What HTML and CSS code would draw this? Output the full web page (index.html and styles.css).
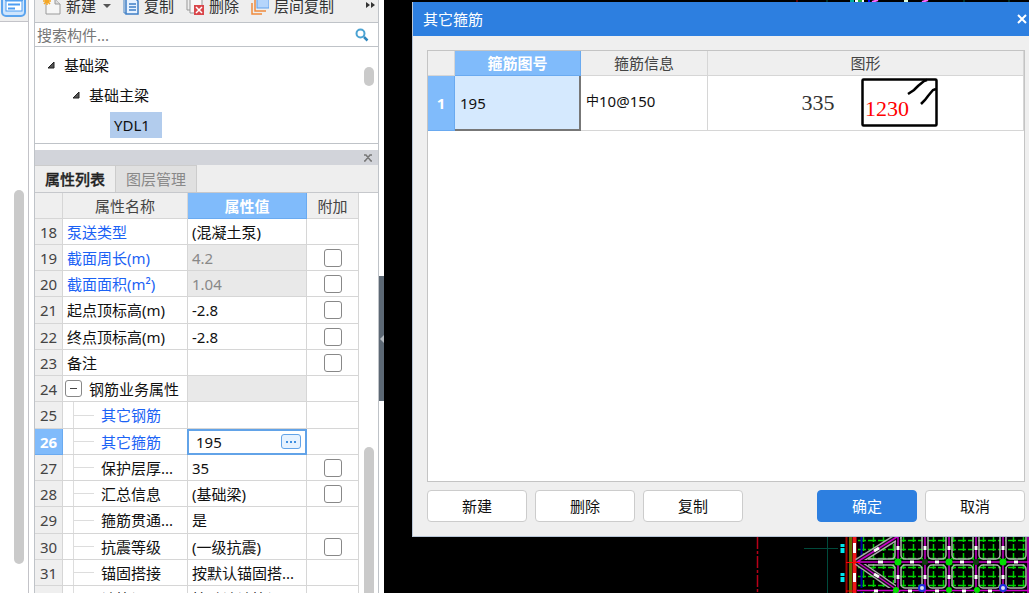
FILE: index.html
```html
<!DOCTYPE html>
<html lang="zh-CN">
<head>
<meta charset="utf-8">
<title>其它箍筋</title>
<link rel="stylesheet" href="styles.css">
</head>
<body>
<div class="app">
  <aside class="nav">
    <div class="nav-bar">
      <button class="nav-btn" aria-label="导航">
        <svg width="18" height="14" viewBox="0 0 18 14"><rect width="18" height="3" fill="#5ba4ee"/><path d="M3 0v2M7 0v2M12 0v2" stroke="#fff"/><rect x="1" y="3" width="16" height="10" fill="#fff" stroke="#4d9df2"/><path d="M3 6.500h12M3 10.500h7" stroke="#4d9df2" stroke-width="2"/></svg>
      </button>
    </div>
    <div class="nav-track"><div class="thumb nav-thumb"></div></div>
  </aside>

  <main class="dock">
    <div class="toolbar">
      <button class="tool tool-new"><svg width="19" height="20" viewBox="0 0 19 20"><path d="M3 4h9l5 5v10H3z" fill="#f6f6f6" stroke="#9a9a9a"/><path d="M12 4v5h5" fill="#ddd" stroke="#9a9a9a"/><path d="M4 2v8M0 6h8M1 3l6 6M7 3L1 9" stroke="#f5a623" stroke-width="1.500"/></svg>新建<span class="caret"></span></button>
      <button class="tool tool-copy"><svg width="17" height="20" viewBox="0 0 17 20"><path d="M1 3v15h3" fill="none" stroke="#4784c7"/><path d="M3 2h8l4 4v13H3z" fill="#e7f2ff" stroke="#3f7fc6" stroke-width="1.500"/><path d="M6 9h7M6 12h7M6 15h7" stroke="#3f7fc6" stroke-width="1.500"/></svg>复制</button>
      <button class="tool tool-del"><svg width="18" height="20" viewBox="0 0 18 20"><path d="M1 3v12h3" fill="none" stroke="#999"/><path d="M4 1h8l4 4v13H4z" fill="#f7f7f7" stroke="#999"/><rect x="8" y="10" width="10" height="10" fill="#d9474b"/><path d="M10 12l6 6M16 12l-6 6" stroke="#fff" stroke-width="1.500"/></svg>删除</button>
      <button class="tool tool-floor"><svg width="18" height="20" viewBox="0 0 18 20"><path d="M1 8v11h10M4 5v11h11" fill="none" stroke="#ef8b3c" stroke-width="1.500"/><rect x="6" y="1" width="12" height="12" fill="#b5d5fb" stroke="#5fa0ec"/></svg>层间复制</button>
      <button class="more" aria-label="更多"><svg width="10" height="8" viewBox="0 0 10 8"><path d="M0 1l4 3-4 3zM5 1l4 3-4 3z" fill="#333"/></svg></button>
    </div>
    <div class="search">
      <input type="text" placeholder="搜索构件..." aria-label="搜索构件">
      <svg width="14" height="14" viewBox="0 0 14 14"><circle cx="5.500" cy="5.500" r="4" fill="none" stroke="#4ba3d3" stroke-width="2"/><path d="M9 9l3.500 3.500" stroke="#2f86bd" stroke-width="2.500"/></svg>
    </div>
    <div class="tree">
      <ul>
        <li class="lv1"><svg width="8" height="8" viewBox="0 0 8 8"><path d="M7 1v6H1z" fill="#555" stroke="#222"/></svg>基础梁</li>
        <li class="lv2"><svg width="8" height="8" viewBox="0 0 8 8"><path d="M7 1v6H1z" fill="#555" stroke="#222"/></svg>基础主梁</li>
        <li class="lv3"><span class="picked">YDL1</span></li>
      </ul>
      <div class="thumb tree-thumb"></div>
    </div>

    <section class="props">
      <div class="props-title"><button aria-label="关闭"><svg width="8" height="8" viewBox="0 0 8 8"><path d="M0 1h2l5 6h1M8 1H6L1 7H0" fill="none" stroke="#777" stroke-width="1.500"/></svg></button></div>
      <div class="tabs"><button class="tab active">属性列表</button><button class="tab">图层管理</button></div>
      <div class="props-body">
        <table class="grid">
          <colgroup><col class="c-no"><col class="c-name"><col class="c-value"><col class="c-add"></colgroup>
          <thead><tr><th></th><th>属性名称</th><th class="hot">属性值</th><th>附加</th></tr></thead>
          <tbody>
            <tr><th>18</th><td class="link">泵送类型</td><td>(混凝土泵)</td><td></td></tr>
            <tr><th>19</th><td class="link">截面周长(m)</td><td class="off">4.2</td><td class="tick"><input type="checkbox" aria-label="截面周长 附加"></td></tr>
            <tr><th>20</th><td class="link">截面面积(m²)</td><td class="off">1.04</td><td class="tick"><input type="checkbox" aria-label="截面面积 附加"></td></tr>
            <tr><th>21</th><td>起点顶标高(m)</td><td>-2.8</td><td class="tick"><input type="checkbox" aria-label="起点顶标高 附加"></td></tr>
            <tr><th>22</th><td>终点顶标高(m)</td><td>-2.8</td><td class="tick"><input type="checkbox" aria-label="终点顶标高 附加"></td></tr>
            <tr><th>23</th><td>备注</td><td></td><td class="tick"><input type="checkbox" aria-label="备注 附加"></td></tr>
            <tr><th>24</th><td class="group"><div class="group-in"><button class="fold" aria-label="折叠"></button>钢筋业务属性</div></td><td class="off"></td><td></td></tr>
            <tr><th>25</th><td class="sub link">其它钢筋</td><td></td><td></td></tr>
            <tr><th class="hot">26</th><td class="sub link">其它箍筋</td><td class="edit"><div class="editor"><input type="text" value="195" aria-label="其它箍筋"><button aria-label="编辑"><i></i><i></i><i></i></button></div></td><td></td></tr>
            <tr><th>27</th><td class="sub">保护层厚...</td><td>35</td><td class="tick"><input type="checkbox" aria-label="保护层厚度 附加"></td></tr>
            <tr><th>28</th><td class="sub">汇总信息</td><td>(基础梁)</td><td class="tick"><input type="checkbox" aria-label="汇总信息 附加"></td></tr>
            <tr><th>29</th><td class="sub">箍筋贯通...</td><td>是</td><td></td></tr>
            <tr><th>30</th><td class="sub">抗震等级</td><td>(一级抗震)</td><td class="tick"><input type="checkbox" aria-label="抗震等级 附加"></td></tr>
            <tr><th>31</th><td class="sub">锚固搭接</td><td>按默认锚固搭...</td><td></td></tr>
            <tr><th>32</th><td class="sub">计算设置</td><td>按默认计算设...</td><td></td></tr>
          </tbody>
        </table>
        <div class="props-track"><div class="thumb props-thumb"></div></div>
      </div>
    </section>
  </main>

  <div class="splitter"><button aria-label="收起"><svg width="4" height="8" viewBox="0 0 4 8"><path d="M4 0v8L0 4z" fill="#b4bac0"/></svg></button></div>

  <div class="canvas">
    <svg class="cad" width="645" height="593" viewBox="384 0 645 593">
      <defs>
        <pattern id="mesh" x="898" y="535" width="10" height="9" patternUnits="userSpaceOnUse"><path d="M0 5.500h8M5.500 0v7" stroke="#00d000" stroke-width="1.500"/></pattern>
      </defs>
      <path d="M797 0v2" stroke="#c00000"/><path d="M827 0v2M964 0v2M1009 0v2" stroke="#006050"/>
      <path d="M850 1h4" stroke="#00b0a0" stroke-width="2"/><path d="M855 1h3M862 1h2" stroke="#fff" stroke-width="2"/><path d="M858 1h4" stroke="#20b040" stroke-width="2"/><path d="M868 1h2" stroke="#00f" stroke-width="2"/><path d="M872 2l6-2M922 2l6-2" stroke="#f6f" stroke-width="2"/><path d="M904 1h4" stroke="#dfd" stroke-width="2"/>
      <path d="M757.500 537v56" stroke="#b80018" stroke-width="1.500" stroke-dasharray="12 2 3 2"/>
      <path d="M827.500 537v56M804 548.500h34" stroke="#004a3c"/>
      <path d="M842.500 544v10M842.500 573v10" stroke="#00e5ee" stroke-width="4" stroke-dasharray="3 1 5 1"/>
      <rect x="857" y="537" width="172" height="56" fill="url(#mesh)"/>
      <path d="M846.500 537v56" stroke="#a00000" stroke-width="2"/>
      <path d="M850.500 537v56" stroke="#607000" stroke-width="3"/>
      <path d="M854.500 537v56" stroke="#f01818" stroke-width="4"/>
      <path d="M854.500 543v10M854.500 573v9" stroke="#fff" stroke-width="3"/>
      <path d="M861.500 537v56" stroke="#0000a0" stroke-width="2"/>
      <g stroke="#aaa" stroke-width="7">
        <path d="M857 562L900 535M857 562L900 592"/>
      </g>
      <g stroke="#151015" stroke-width="4"><path d="M857 562L900 535M857 562L900 592"/></g>
      <g stroke="#000" stroke-width="4"><path d="M857 562h172M857 590h172M898 537v56M925 537v56M949 537v56M976 537v56M1003 537v56M1028 537v56"/></g>
      <g fill="none" stroke="#b0b0b0" stroke-width="1.500">
        <rect x="901" y="530" width="21" height="29" rx="4"/><rect x="928" y="530" width="18" height="29" rx="4"/><rect x="952" y="530" width="21" height="29" rx="4"/><rect x="979" y="530" width="21" height="29" rx="4"/><rect x="1006" y="530" width="20" height="29" rx="4"/>
        <rect x="901" y="565" width="21" height="23" rx="4"/><rect x="928" y="565" width="18" height="23" rx="4"/><rect x="952" y="565" width="21" height="23" rx="4"/><rect x="979" y="565" width="21" height="23" rx="4"/><rect x="1006" y="565" width="20" height="23" rx="4"/>
        <path d="M868 559h23q4 0 4-4v-14M868 565h23q4 0 4 4v14"/>
      </g>
      <g stroke="#c800c8" stroke-width="1.500">
        <path d="M857 562h172M857 590.500h172M898 537v56M925 537v56M949 537v56M976 537v56M1003 537v56M1028 537v56M857 562L900 535M857 562L900 592"/>
      </g>
      <g stroke="#fff" stroke-width="3">
        <path d="M878 562h5M910 562h4M935 562h4M960 562h4M987 562h4M1014 562h4M874 551l5-3M874 574l5 3M874 591h4M908 591h4M935 591h4M962 591h4M988 591h4"/>
        <path d="M898 546v4M925 546v4M949 546v4M976 546v4M1003 546v4M898 575v4M925 575v4M949 575v4M976 575v4M1003 575v4"/>
      </g>
      <path d="M846 562.500h14M846 591h10" stroke="#f00"/>
      <g fill="#00e000"><circle cx="898" cy="562" r="3.500"/><circle cx="949" cy="562" r="3.500"/><circle cx="1003" cy="562" r="3.500"/><circle cx="896" cy="590" r="3"/><circle cx="949" cy="590" r="3"/><circle cx="977" cy="590" r="3"/></g>
      <g fill="#104010"><circle cx="925" cy="562" r="3"/><circle cx="976" cy="562" r="3"/></g>
      <g fill="#dde" stroke="#2030e0" stroke-width="2"><circle cx="922" cy="588" r="3"/><circle cx="1003" cy="588" r="3"/></g>
    </svg>

    <section class="dialog" role="dialog" aria-labelledby="dlg-title">
      <header class="dialog-title"><h1 id="dlg-title">其它箍筋</h1><button aria-label="关闭"><svg width="10" height="10" viewBox="0 0 10 10"><path d="M1 1l8 8M9 1L1 9" stroke="#fff" stroke-width="2"/></svg></button></header>
      <div class="dialog-body">
        <div class="list">
          <table class="stirrups">
            <colgroup><col class="s-no"><col class="s-code"><col class="s-info"><col></colgroup>
            <thead><tr><th></th><th class="hot">箍筋图号</th><th>箍筋信息</th><th>图形</th></tr></thead>
            <tbody><tr>
              <th class="hot">1</th><td class="current">195</td><td class="info"><span class="rebar">中</span>10@150</td>
              <td><div class="shape"><span>335</span><svg width="77" height="50" viewBox="0 0 77 50"><rect x="1.500" y="1.500" width="74" height="46" rx="1" fill="none" stroke="#000" stroke-width="2.500"/><path d="M47 16l6-4 4-4 6-5 3-1M60 26l4-4 3-4 5-6 3-1" fill="none" stroke="#000" stroke-width="2.500"/><text x="4" y="38" class="shape-len">1230</text></svg></div></td>
            </tr></tbody>
          </table>
        </div>
        <footer class="actions">
          <button class="btn">新建</button><button class="btn">删除</button><button class="btn">复制</button>
          <button class="btn primary">确定</button><button class="btn">取消</button>
        </footer>
      </div>
    </section>
  </div>
</div>
</body>
</html>
```
FILE: styles.css
```css
* { box-sizing: border-box; }
body {
  margin: 0;
  font: 15px/24px "Noto Sans", "Noto Sans CJK SC", sans-serif;
  color: #111;
  background: #fff;
}
button, input { font: inherit; color: inherit; margin: 0; }
button { padding: 0; border: 0; background: none; }
svg { display: block; flex: none; }
.app { display: flex; height: 100vh; overflow: hidden; }
.thumb { width: 10px; border-radius: 5px; background: #cacaca; }

/* left navigation strip */
.nav { width: 29px; flex: none; display: flex; flex-direction: column; border-right: 1px solid #c3c3c8; }
.nav-bar { height: 22px; display: flex; align-items: flex-end; padding: 0 1px 4px; overflow: hidden; background: #eee; border-bottom: 1px solid #c3c3c8; }
.nav-btn { width: 25px; height: 26px; flex: none; display: flex; justify-content: center; align-items: flex-end; padding-bottom: 3px; border: 2px solid #5ba4ee; border-radius: 5px; background: #cfe5fd; }
.nav-track { flex: 1; display: flex; justify-content: flex-end; padding: 168px 4px 29px 0; }

/* component dock */
.dock { width: 345px; flex: none; margin-left: 5px; display: flex; flex-direction: column; border: solid #bfc3c8; border-width: 0 1px; }
.toolbar { height: 23px; flex: none; display: flex; align-items: flex-end; gap: 12px; padding: 0 2px 1px 8px; overflow: hidden; background: #eee; border-bottom: 1px solid #bfc3c8; color: #333; }
.tool { display: flex; align-items: center; gap: 4px; height: 30px; flex: none; white-space: nowrap; }
.tool svg { margin-bottom: 2px; }
.tool-del, .tool-floor { gap: 5px; }
.caret { margin-left: 3px; border: 4px solid transparent; border-top-color: #555; border-bottom-width: 0; }
.more { margin-left: auto; height: 30px; padding-bottom: 2px; }
.search { height: 24px; flex: none; display: flex; align-items: center; padding: 0 9px 0 2px; border-bottom: 1px solid #bfc3c8; }
.search input { flex: 1; min-width: 0; height: 23px; padding: 0; border: 0; outline: 0; background: none; }
.search input::placeholder { color: #777; opacity: 1; }
.tree { height: 97px; flex: none; display: flex; justify-content: space-between; padding: 3px 4px 0 0; border-bottom: 1px solid #bfc3c8; }
.tree ul { margin: 0; padding: 0; list-style: none; }
.tree li { height: 30px; display: flex; align-items: center; gap: 9px; }
.lv1 { padding-left: 12px; }
.lv2 { padding-left: 37px; }
.lv3 { padding-left: 75px; }
.picked { height: 26px; padding: 1px 12px 1px 4px; background: #b2cced; }
.tree-thumb { height: 19px; margin-top: 17px; }

/* property list */
.props { flex: 1; min-height: 0; display: flex; flex-direction: column; margin-top: 6px; overflow: hidden; }
.props-title { height: 15px; flex: none; display: flex; align-items: center; justify-content: flex-end; padding-right: 6px; background: #d2d4da; }
.tabs { height: 28px; flex: none; display: flex; background: #eee; border-bottom: 1px solid #c6c8cc; }
.tab { width: 81px; color: #888; background: #e0e0e0; border: solid #ccc; border-width: 1px 1px 0 0; }
.tab.active { color: #222; font-weight: 500; background: #eee; -webkit-text-stroke: 0.3px #222; }
.props-body { flex: 1; min-height: 0; display: flex; align-items: flex-start; justify-content: space-between; overflow: hidden; }
.props-track { align-self: stretch; display: flex; padding: 254px 4px 0 0; }
.props-thumb { border-radius: 5px 5px 0 0; }
table { table-layout: fixed; border-collapse: separate; border-spacing: 0; }
th, td { padding: 0; font-weight: 400; border: solid #d6d6d6; border-width: 0 1px 1px 0; white-space: nowrap; }
td { text-align: left; }
th { background: #efefef; color: #444; text-align: center; }
th.hot { background: #80bbfb; border-color: #6aaaf0; color: #fff; font-weight: 700; }
.grid { width: 324px; flex: none; }
.c-no { width: 28px; }
.c-name { width: 125px; }
.c-value { width: 119px; }
.c-add { width: 52px; }
.grid thead th { height: 26px; }
.grid tbody tr { height: 26px; }
.grid tbody tr:nth-child(4n) { height: 27px; }
.grid td { padding-left: 4px; }
.grid .link { color: #1b62f5; }
.grid .off { background: #e9e9e9; color: #888; }
.grid .tick { padding: 0; }
.tick input { display: block; appearance: none; width: 18px; height: 18px; margin: 0 auto; border: 1px solid #888; border-radius: 3px; background: #fff; }
.grid .group { padding-left: 2px; }
.group-in { display: flex; align-items: center; gap: 7px; }
.fold { width: 17px; height: 17px; display: flex; align-items: center; justify-content: center; border: 1px solid #888; border-radius: 3px; }
.fold::before { content: ""; width: 7px; height: 1px; background: #444; }
.grid .sub { padding-left: 38px; background: linear-gradient(#ddd, #ddd) 10px 50% / 21px 1px no-repeat, linear-gradient(#ddd, #ddd) 10px 0 / 1px 100% no-repeat; }
.grid .edit { padding: 0; }
.editor { height: 26px; margin: -1px; display: flex; align-items: center; padding: 0 4px 0 7px; border: 2px solid #62a3e8; background: #fff; }
.editor input { flex: 1; min-width: 0; height: 22px; padding: 0; border: 0; outline: 0; }
.editor button { width: 20px; height: 15px; display: flex; align-items: center; justify-content: center; gap: 2px; border: 1px solid #62a3e8; border-radius: 3px; background: #e6f2ff; }
.editor i { width: 2px; height: 2px; background: #3f8fe0; }

/* splitter between dock and canvas */
.splitter { width: 5px; flex: none; display: flex; align-items: flex-start; padding-top: 276px; }
.splitter button { width: 5px; height: 125px; display: flex; align-items: center; justify-content: flex-end; background: #5c6874; }

/* drawing canvas and dialog window */
.canvas { position: relative; flex: 1; min-width: 0; overflow: hidden; background: #000; }
.cad { position: absolute; top: 0; left: 0; }
.dialog { position: absolute; top: 2px; right: 0; bottom: 56px; left: 28px; display: flex; flex-direction: column; background: #efefef; border: solid #b9c6d6; border-width: 0 0 1px 1px; }
.dialog-title { height: 34px; flex: none; display: flex; align-items: center; justify-content: space-between; padding: 0 2px 0 10px; background: #2d7fe0; color: #fff; }
.dialog-title h1 { margin: 0; font-size: 15px; font-weight: 400; }
.dialog-body { flex: 1; min-height: 0; display: flex; flex-direction: column; gap: 8px; padding: 14px 4px 14px 14px; }
.list { flex: 1; min-height: 0; background: #fff; border: 1px solid #c4c4c4; }
.stirrups { width: 100%; }
.s-no { width: 27px; }
.s-code { width: 126px; }
.s-info { width: 127px; }
.stirrups thead th { height: 25px; }
.stirrups tbody tr { height: 55px; }
.stirrups td { padding-left: 5px; }
.stirrups .current { background: #d5e9fe; border: solid #777; border-width: 0 2px 2px 0; }
.stirrups .info { padding-bottom: 5px; }
.rebar { font-size: 13px; vertical-align: 2px; }
.shape { display: flex; align-items: center; justify-content: center; gap: 26px; padding-left: 3px; }
.shape span, .shape-len { font: 22px/26px "Liberation Serif", serif; color: #333; }
.shape-len { fill: #f00; }
.actions { flex: none; display: flex; gap: 8px; }
.btn { width: 100px; height: 32px; border: 1px solid #ccc; border-radius: 4px; background: #fff; }
.btn.primary { margin-left: auto; border-color: #2d7fe0; background: #2d7fe0; color: #fff; }
```
